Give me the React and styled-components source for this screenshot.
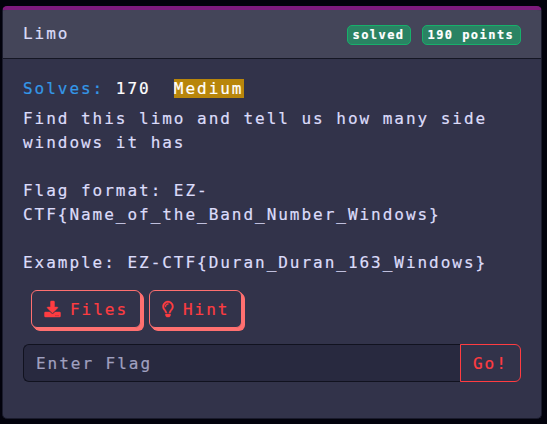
import React from "react";
import styled, { createGlobalStyle } from "styled-components";
import { FaDownload, FaRegLightbulb } from "react-icons/fa";

const GlobalStyle = createGlobalStyle`
  *, *::before, *::after { box-sizing: border-box; }
  body {
    margin: 0;
    background: #02020c;
    color: #dcdcfa;
    font-family: "DejaVu Sans Mono", monospace;
    font-size: 16px;
    line-height: 24px;
    letter-spacing: 1.97px;
    font-variant-ligatures: none;
    -webkit-text-stroke: 0.2px currentColor;
  }
`;

const Page = styled.main`
  height: 424px;
  padding: 6px 5px 5px 2px;
  overflow: hidden;
`;

const Card = styled.article`
  display: flex;
  flex-direction: column;
  height: 413px;
  background: #32334a;
  border: 1px solid #1a1b2c;
  border-top: 4px solid #7d1b7e;
  border-radius: 5px;
  overflow: hidden;
`;

const CardHeader = styled.header`
  display: flex;
  align-items: center;
  justify-content: space-between;
  height: 49px;
  padding: 0 20px;
  background: #444559;
  border-bottom: 1px solid #151624;
`;

const Title = styled.h1`
  margin: 0 0 1px;
  font-size: inherit;
  font-weight: 400;
`;

const Badges = styled.div`
  display: flex;
  gap: 11px;
  margin-top: 1px;
`;

const Badge = styled.span`
  width: ${({ $width }) => $width}px;
  height: 20px;
  padding-left: 4.5px;
  border: 1px solid #17b06b;
  border-radius: 5px;
  background: #2a8363;
  color: #fff;
  font-size: 12px;
  font-weight: 700;
  line-height: 18px;
  letter-spacing: 1.45px;
  white-space: nowrap;
`;

const CardBody = styled.div`
  padding: 18px 20px;
`;

const Stats = styled.div`
  display: flex;
  height: 24px;
  margin-bottom: 6px;
  color: #fff;
`;

const Label = styled.span`
  margin-right: 11.6px;
  color: #3498e8;
`;

const Difficulty = styled.span`
  height: 19px;
  margin: 2px 0 0 23.2px;
  padding-right: 0.7px;
  background: #b8860b;
  line-height: 20px;
`;

const Description = styled.p`
  margin: 0 0 24px;
`;

const Actions = styled.div`
  display: flex;
  gap: 8px;
  margin: -9px 0 16px 8px;
`;

const ActionButton = styled.button`
  display: flex;
  align-items: center;
  width: ${({ $width }) => $width}px;
  height: 38px;
  padding: 1px 0 0 12px;
  border: 1px solid #ff7070;
  border-radius: 6px;
  background: #32334a;
  box-shadow: 1px 1px #ff7070, 2px 2px #ff7070, 3px 3px #ff7070;
  color: #ff3c41;
  font: inherit;
  letter-spacing: inherit;

  svg {
    flex: none;
    width: ${({ $iconWidth }) => $iconWidth}px;
    height: 16px;
    margin: -1px 9px 0 0;
    stroke: currentColor;
    stroke-width: 14px;
    overflow: visible;
  }
`;

const FlagForm = styled.form`
  display: flex;
  height: 38px;
`;

const FlagInput = styled.input`
  flex: 1;
  min-width: 0;
  padding: 1px 12px 0;
  border: 1px solid #11121f;
  border-right: 0;
  border-radius: 6px 0 0 6px;
  background: #28293f;
  color: #dcdcfa;
  font: inherit;
  letter-spacing: inherit;

  &::placeholder { color: #a0a0c0; opacity: 1; }
`;

const SubmitButton = styled.button`
  width: 61px;
  padding: 1px 0 0 12px;
  border: 1px solid #ff3c41;
  border-radius: 0 6px 6px 0;
  background: transparent;
  color: #ff3c41;
  font: inherit;
  letter-spacing: inherit;
  text-align: left;
`;

export default function App() {
  return (
    <Page>
      <GlobalStyle />
      <Card>
        <CardHeader>
          <Title>Limo</Title>
          <Badges>
            <Badge $width={64}>solved</Badge>
            <Badge $width={99}>190 points</Badge>
          </Badges>
        </CardHeader>
        <CardBody>
          <Stats>
            <Label>Solves:</Label>
            <span>170</span>
            <Difficulty>Medium</Difficulty>
          </Stats>
          <Description>
            Find this limo and tell us how many side
            <br />
            windows it has
          </Description>
          <Description>
            Flag format: EZ-
            <br />
            CTF&#123;Name_of_the_Band_Number_Windows&#125;
          </Description>
          <Description>Example: EZ-CTF&#123;Duran_Duran_163_Windows&#125;</Description>
          <Actions>
            <ActionButton type="button" $width={110} $iconWidth={17}>
              <FaDownload />
              Files
            </ActionButton>
            <ActionButton type="button" $width={93} $iconWidth={12}>
              <FaRegLightbulb />
              Hint
            </ActionButton>
          </Actions>
          <FlagForm onSubmit={(event) => event.preventDefault()}>
            <FlagInput placeholder="Enter Flag" aria-label="Flag" />
            <SubmitButton type="submit">Go!</SubmitButton>
          </FlagForm>
        </CardBody>
      </Card>
    </Page>
  );
}
